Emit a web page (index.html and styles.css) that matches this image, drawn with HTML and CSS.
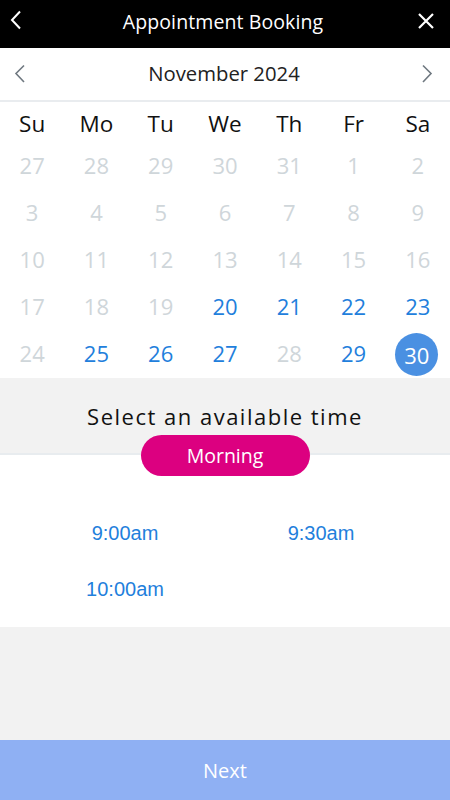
FILE: index.html
```html
<!DOCTYPE html>
<html lang="en">
<head>
<meta charset="utf-8">
<title>Appointment Booking</title>
<link rel="stylesheet" href="styles.css">
</head>
<body>
<div class="app">
  <header class="topbar">
    <button class="icon-btn" aria-label="Back">
      <svg width="24" height="24" viewBox="0 0 24 24"><path d="M16 1.5 L8 10 L16 18.5" fill="none" stroke="#fff" stroke-width="2"/></svg>
    </button>
    <h1 class="title">Appointment Booking</h1>
    <button class="icon-btn" aria-label="Close">
      <svg width="24" height="24" viewBox="0 0 24 24"><path d="M5 4 L19 18 M19 4 L5 18" fill="none" stroke="#fff" stroke-width="2.2"/></svg>
    </button>
  </header>

  <div class="month-nav">
    <button class="nav-btn" aria-label="Previous month">
      <svg width="24" height="24" viewBox="0 0 24 24"><path d="M16 3.5 L8 11.5 L16 20" fill="none" stroke="#6f7880" stroke-width="1.6"/></svg>
    </button>
    <div class="month">November 2024</div>
    <button class="nav-btn" aria-label="Next month">
      <svg width="24" height="24" viewBox="0 0 24 24"><path d="M8 3.5 L16 11.5 L8 20" fill="none" stroke="#6f7880" stroke-width="1.6"/></svg>
    </button>
  </div>

  <div class="calendar">
    <div class="wd">Su</div><div class="wd">Mo</div><div class="wd">Tu</div><div class="wd">We</div><div class="wd">Th</div><div class="wd">Fr</div><div class="wd">Sa</div>

    <div class="day off">27</div><div class="day off">28</div><div class="day off">29</div><div class="day off">30</div><div class="day off">31</div><div class="day off">1</div><div class="day off">2</div>
    <div class="day off">3</div><div class="day off">4</div><div class="day off">5</div><div class="day off">6</div><div class="day off">7</div><div class="day off">8</div><div class="day off">9</div>
    <div class="day off">10</div><div class="day off">11</div><div class="day off">12</div><div class="day off">13</div><div class="day off">14</div><div class="day off">15</div><div class="day off">16</div>
    <div class="day off">17</div><div class="day off">18</div><div class="day off">19</div><div class="day on">20</div><div class="day on">21</div><div class="day on">22</div><div class="day on">23</div>
    <div class="day off">24</div><div class="day on">25</div><div class="day on">26</div><div class="day on">27</div><div class="day off">28</div><div class="day on">29</div><div class="day on"><span class="selected">30</span></div>
  </div>

  <section class="time-head">
    <div class="time-title">Select an available time</div>
  </section>

  <section class="slots-area">
    <div class="pill">Morning</div>
    <div class="slots">
      <div class="slot">9:00am</div>
      <div class="slot">9:30am</div>
      <div class="slot">10:00am</div>
    </div>
  </section>

  <div class="filler"></div>

  <button class="next">Next</button>
</div>
</body>
</html>
```

FILE: styles.css
```css
* { box-sizing: border-box; }
html, body { margin: 0; padding: 0; }
body {
  font-family: "Open Sans", "Noto Sans", sans-serif;
  background: #f2f2f2;
  width: 450px;
  height: 800px;
  overflow: hidden;
}
.app {
  display: flex;
  flex-direction: column;
  height: 800px;
}
button {
  font-family: inherit;
  border: 0;
  background: none;
  padding: 0;
  cursor: pointer;
}
.topbar {
  flex-shrink: 0;
  height: 48px;
  background: #000;
  display: flex;
  align-items: center;
  justify-content: space-between;
  padding: 0 12px 0 4px;
}
.icon-btn {
  width: 24px;
  height: 24px;
  display: flex;
  margin-top: -4px;
}
.title {
  margin: 0;
  color: #fff;
  font-size: 19.5px;
  font-weight: 400;
  margin-top: -6px;
  margin-left: 4px;
  letter-spacing: 0.1px;
}
.month-nav {
  flex-shrink: 0;
  height: 54px;
  background: #fff;
  border-bottom: 2px solid #e9ecef;
  display: flex;
  align-items: center;
  justify-content: space-between;
  padding: 0 11px 0 8px;
}
.nav-btn {
  width: 24px;
  height: 24px;
  display: flex;
}
.month {
  font-size: 20.3px;
  color: #222;
  margin-top: -2px;
  margin-left: 1px;
}
.calendar {
  flex-shrink: 0;
  background: #fff;
  display: grid;
  grid-template-columns: repeat(7, 1fr);
  grid-template-rows: 41px repeat(5, 47px);
}
.wd {
  display: flex;
  align-items: center;
  justify-content: center;
  font-size: 22.5px;
  color: #111;
  padding-top: 1px;
}
.day {
  display: flex;
  align-items: center;
  justify-content: center;
  font-size: 22px;
  padding-bottom: 3px;
}
.off { color: #cfd6da; }
.on { color: #1f80dc; }
.selected {
  width: 43px;
  height: 43px;
  border-radius: 50%;
  background: #4a90e2;
  color: #fff;
  display: flex;
  align-items: center;
  justify-content: center;
  margin-right: 2px;
  margin-top: 3px;
}
.time-head {
  flex-shrink: 0;
  height: 77px;
  background: #f2f2f2;
  border-bottom: 2px solid #e8ecef;
  display: flex;
  justify-content: center;
  padding-top: 23px;
}
.time-title {
  font-size: 22px;
  letter-spacing: 1.5px;
  color: #111;
}
.slots-area {
  flex-shrink: 0;
  background: #fff;
  height: 172px;
  display: flex;
  flex-direction: column;
  align-items: center;
}
.pill {
  flex-shrink: 0;
  margin-top: -20px;
  width: 169px;
  height: 41px;
  border-radius: 21px;
  background: #dc0080;
  color: #fff;
  font-size: 19.5px;
  display: flex;
  align-items: center;
  justify-content: center;
  padding-bottom: 1px;
}
.slots {
  flex-shrink: 0;
  align-self: stretch;
  display: grid;
  grid-template-columns: 1fr 1fr;
  grid-auto-rows: 24px;
  row-gap: 32px;
  padding: 45px 31px 0 27px;
}
.slot {
  font-family: "Liberation Sans", Arial, sans-serif;
  font-size: 20px;
  color: #1f80dc;
  text-align: center;
  line-height: 24px;
}
.filler {
  flex: 1;
  background: #f2f2f2;
}
.next {
  flex-shrink: 0;
  height: 60px;
  background: #8fb0f3;
  color: #fff;
  font-size: 20px;
  width: 100%;
  display: flex;
  align-items: center;
  justify-content: center;
}
```
